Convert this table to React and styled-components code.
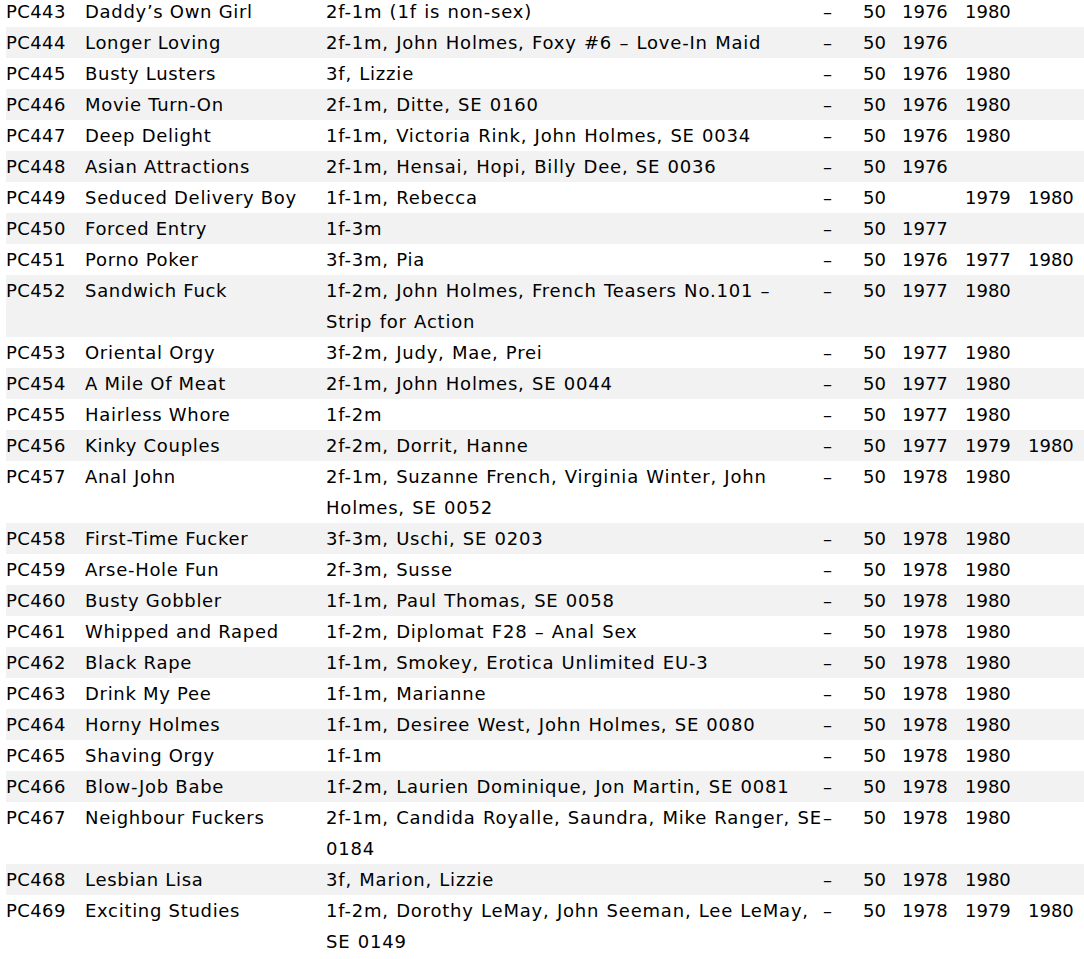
import styled, { createGlobalStyle } from "styled-components";

const GlobalStyle = createGlobalStyle`
  html, body {
    margin: 0;
    padding: 0;
    background: #fff;
    overflow: hidden;
  }
`;

// [code, title, cast, years]
const films = [
  ["PC443", "Daddy’s Own Girl", "2f-1m (1f is non-sex)", ["1976", "1980", ""]],
  ["PC444", "Longer Loving", "2f-1m, John Holmes, Foxy #6 – Love-In Maid", ["1976", "", ""]],
  ["PC445", "Busty Lusters", "3f, Lizzie", ["1976", "1980", ""]],
  ["PC446", "Movie Turn-On", "2f-1m, Ditte, SE 0160", ["1976", "1980", ""]],
  ["PC447", "Deep Delight", "1f-1m, Victoria Rink, John Holmes, SE 0034", ["1976", "1980", ""]],
  ["PC448", "Asian Attractions", "2f-1m, Hensai, Hopi, Billy Dee, SE 0036", ["1976", "", ""]],
  ["PC449", "Seduced Delivery Boy", "1f-1m, Rebecca", ["", "1979", "1980"]],
  ["PC450", "Forced Entry", "1f-3m", ["1977", "", ""]],
  ["PC451", "Porno Poker", "3f-3m, Pia", ["1976", "1977", "1980"]],
  ["PC452", "Sandwich Fuck", "1f-2m, John Holmes, French Teasers No.101 – Strip for Action", ["1977", "1980", ""]],
  ["PC453", "Oriental Orgy", "3f-2m, Judy, Mae, Prei", ["1977", "1980", ""]],
  ["PC454", "A Mile Of Meat", "2f-1m, John Holmes, SE 0044", ["1977", "1980", ""]],
  ["PC455", "Hairless Whore", "1f-2m", ["1977", "1980", ""]],
  ["PC456", "Kinky Couples", "2f-2m, Dorrit, Hanne", ["1977", "1979", "1980"]],
  ["PC457", "Anal John", "2f-1m, Suzanne French, Virginia Winter, John Holmes, SE 0052", ["1978", "1980", ""]],
  ["PC458", "First-Time Fucker", "3f-3m, Uschi, SE 0203", ["1978", "1980", ""]],
  ["PC459", "Arse-Hole Fun", "2f-3m, Susse", ["1978", "1980", ""]],
  ["PC460", "Busty Gobbler", "1f-1m, Paul Thomas, SE 0058", ["1978", "1980", ""]],
  ["PC461", "Whipped and Raped", "1f-2m, Diplomat F28 – Anal Sex", ["1978", "1980", ""]],
  ["PC462", "Black Rape", "1f-1m, Smokey, Erotica Unlimited EU-3", ["1978", "1980", ""]],
  ["PC463", "Drink My Pee", "1f-1m, Marianne", ["1978", "1980", ""]],
  ["PC464", "Horny Holmes", "1f-1m, Desiree West, John Holmes, SE 0080", ["1978", "1980", ""]],
  ["PC465", "Shaving Orgy", "1f-1m", ["1978", "1980", ""]],
  ["PC466", "Blow-Job Babe", "1f-2m, Laurien Dominique, Jon Martin, SE 0081", ["1978", "1980", ""]],
  ["PC467", "Neighbour Fuckers", "2f-1m, Candida Royalle, Saundra, Mike Ranger, SE 0184", ["1978", "1980", ""]],
  ["PC468", "Lesbian Lisa", "3f, Marion, Lizzie", ["1978", "1980", ""]],
  ["PC469", "Exciting Studies", "1f-2m, Dorothy LeMay, John Seeman, Lee LeMay, SE 0149", ["1978", "1979", "1980"]],
];

const colWidths = [79, 241, 497, 40, 39, 63, 63, 63];

const Table = styled.table`
  margin: -4px 0 0 6px;
  border-collapse: collapse;
  table-layout: fixed;
  width: ${colWidths.reduce((a, b) => a + b, 0)}px;
  font-family: "DejaVu Sans", Verdana, sans-serif;
  font-size: 18px;
  line-height: 31px;
  color: #000;
`;

const Col = styled.col`
  width: ${(props) => props.$w}px;
`;

const Row = styled.tr`
  background: ${(props) => (props.$striped ? "#f2f2f2" : "#fff")};
`;

const Cell = styled.td`
  padding: 0;
  vertical-align: top;
  text-align: left;
  white-space: nowrap;
`;

const CodeCell = styled(Cell)`
  letter-spacing: 0.4px;
`;

const TitleCell = styled(Cell)`
  letter-spacing: 0.7px;
`;

// widened so DejaVu wraps where the original Verdana did
const CastCell = styled(Cell)`
  white-space: normal;
  letter-spacing: 0.8px;
  word-spacing: 0.8px;
`;

export default function App() {
  return (
    <>
      <GlobalStyle />
      <Table>
        <colgroup>
          {colWidths.map((w, i) => (
            <Col key={i} $w={w} />
          ))}
        </colgroup>
        <tbody>
          {films.map(([code, title, cast, years], i) => (
            <Row key={code} $striped={i % 2 === 1}>
              <CodeCell>{code}</CodeCell>
              <TitleCell>{title}</TitleCell>
              <CastCell>{cast}</CastCell>
              <Cell>–</Cell>
              <Cell>50</Cell>
              {years.map((y, j) => (
                <Cell key={j}>{y}</Cell>
              ))}
            </Row>
          ))}
        </tbody>
      </Table>
    </>
  );
}
